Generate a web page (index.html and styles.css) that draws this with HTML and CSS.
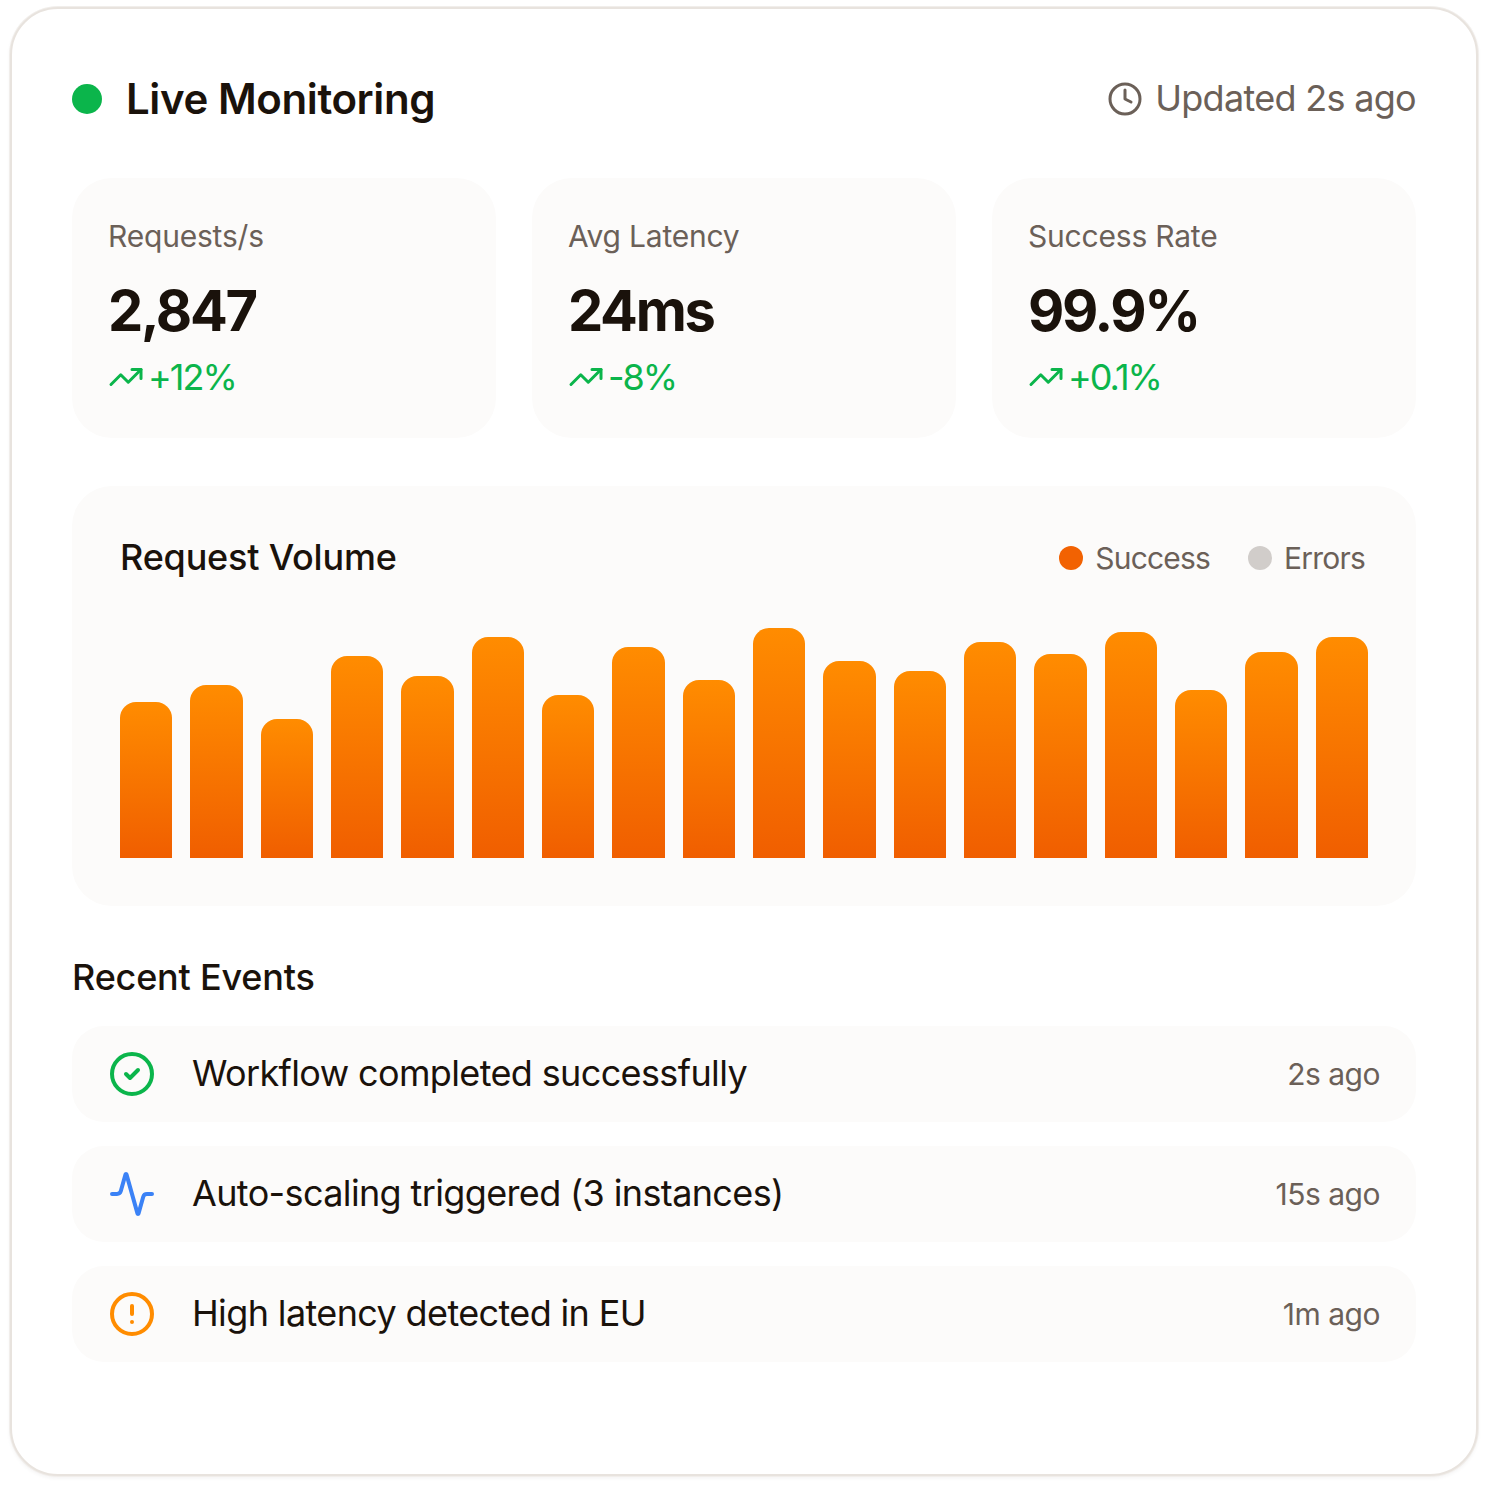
FILE: index.html
```html
<!DOCTYPE html>
<html lang="en">
<head>
<meta charset="utf-8">
<title>Live Monitoring</title>
<link rel="stylesheet" href="styles.css">
</head>
<body>
<main class="card">
  <header class="header">
    <div class="header-left"><span class="live-dot"></span><h1 class="title">Live Monitoring</h1></div>
    <div class="updated">
      <svg class="icon-clock" viewBox="0 0 24 24"><circle cx="12" cy="12" r="10"/><polyline points="12 6 12 12 16 14"/></svg>
      <span class="updated-text">Updated 2s ago</span>
    </div>
  </header>
  <section class="stats">
    <div class="stat">
      <div class="stat-label">Requests/s</div>
      <div class="stat-value">2,847</div>
      <div class="stat-trend"><svg class="icon-trend" viewBox="0 0 24 24"><polyline points="22 7 13.5 15.5 8.5 10.5 2 17"/><polyline points="16 7 22 7 22 13"/></svg><span>+12%</span></div>
    </div>
    <div class="stat">
      <div class="stat-label">Avg Latency</div>
      <div class="stat-value">24ms</div>
      <div class="stat-trend"><svg class="icon-trend" viewBox="0 0 24 24"><polyline points="22 7 13.5 15.5 8.5 10.5 2 17"/><polyline points="16 7 22 7 22 13"/></svg><span>-8%</span></div>
    </div>
    <div class="stat">
      <div class="stat-label">Success Rate</div>
      <div class="stat-value">99.9%</div>
      <div class="stat-trend"><svg class="icon-trend" viewBox="0 0 24 24"><polyline points="22 7 13.5 15.5 8.5 10.5 2 17"/><polyline points="16 7 22 7 22 13"/></svg><span>+0.1%</span></div>
    </div>
  </section>
  <section class="chart">
    <div class="chart-head">
      <h2 class="chart-title">Request Volume</h2>
      <div class="legend">
        <div class="legend-item"><span class="legend-dot legend-success"></span><span>Success</span></div>
        <div class="legend-item"><span class="legend-dot legend-errors"></span><span>Errors</span></div>
      </div>
    </div>
    <div class="bars">
      <div class="bar" style="height:156px"></div>
      <div class="bar" style="height:173px"></div>
      <div class="bar" style="height:139px"></div>
      <div class="bar" style="height:202px"></div>
      <div class="bar" style="height:182px"></div>
      <div class="bar" style="height:221px"></div>
      <div class="bar" style="height:163px"></div>
      <div class="bar" style="height:211px"></div>
      <div class="bar" style="height:178px"></div>
      <div class="bar" style="height:230px"></div>
      <div class="bar" style="height:197px"></div>
      <div class="bar" style="height:187px"></div>
      <div class="bar" style="height:216px"></div>
      <div class="bar" style="height:204px"></div>
      <div class="bar" style="height:226px"></div>
      <div class="bar" style="height:168px"></div>
      <div class="bar" style="height:206px"></div>
      <div class="bar" style="height:221px"></div>
    </div>
  </section>
  <section class="events">
    <h2 class="events-title">Recent Events</h2>
    <div class="event-list">
      <div class="event">
        <svg class="event-icon icon-green" viewBox="0 0 24 24"><circle cx="12" cy="12" r="10"/><path d="m9 12 2 2 4-4"/></svg>
        <span class="event-text">Workflow completed successfully</span>
        <span class="event-time">2s ago</span>
      </div>
      <div class="event">
        <svg class="event-icon icon-blue" viewBox="0 0 24 24"><path d="M22 12h-2.48a2 2 0 0 0-1.93 1.46l-2.35 8.36a.25.25 0 0 1-.48 0L9.24 2.18a.25.25 0 0 0-.48 0l-2.35 8.36A2 2 0 0 1 4.49 12H2"/></svg>
        <span class="event-text">Auto-scaling triggered (3 instances)</span>
        <span class="event-time">15s ago</span>
      </div>
      <div class="event">
        <svg class="event-icon icon-orange" viewBox="0 0 24 24"><circle cx="12" cy="12" r="10"/><line x1="12" y1="8" x2="12" y2="12"/><line x1="12" y1="16" x2="12.01" y2="16"/></svg>
        <span class="event-text">High latency detected in EU</span>
        <span class="event-time">1m ago</span>
      </div>
    </div>
  </section>
</main>
</body>
</html>
```
FILE: styles.css
```css
* { box-sizing: border-box; }
html, body { margin: 0; background: #fff; }
body { padding: 7px 10px 12px; font-family: Inter, "Liberation Sans", sans-serif; color: #1a120b; }
h1, h2 { margin: 0; }
svg { fill: none; stroke: currentColor; stroke-width: 2; stroke-linecap: round; stroke-linejoin: round; flex: none; display: block; }

.card { height: 1469px; padding: 60px; background: #fff; border: 2px solid #e8e3de; border-radius: 48px; box-shadow: 0 0 0 1px #f1eeeb, 0 2px 4px rgba(26, 18, 11, .06); }

.header { display: flex; justify-content: space-between; align-items: center; height: 60px; margin-bottom: 49px; }
.header-left { display: flex; align-items: center; gap: 24px; }
.live-dot { width: 30px; height: 30px; border-radius: 50%; background: #0bb54b; }
.title { font-size: 42px; font-weight: 600; line-height: 60px; letter-spacing: -.4px; }
.updated { display: flex; align-items: center; gap: 12px; font-size: 36px; color: #6b6058; letter-spacing: -.7px; }
.updated-text { padding-bottom: 2px; }
.icon-clock { width: 36px; height: 36px; }

.stats { display: grid; grid-template-columns: repeat(3, 1fr); gap: 36px; margin-bottom: 48px; }
.stat { height: 260px; padding: 36px; background: #fcfbfa; border-radius: 40px; }
.stat-label { font-size: 30px; line-height: 44px; color: #6b6058; letter-spacing: -.2px; }
.stat-value { font-size: 56px; font-weight: 700; line-height: 72px; margin-top: 17px; letter-spacing: -2.3px; }
.stat-trend { display: flex; align-items: center; gap: 4px; margin-top: 8px; font-size: 36px; line-height: 44px; color: #0bb54b; letter-spacing: -2px; }
.icon-trend { width: 36px; height: 36px; }

.chart { height: 420px; padding: 48px; margin-bottom: 48px; background: #fcfbfa; border-radius: 40px; }
.chart-head { display: flex; justify-content: space-between; align-items: center; height: 48px; margin-bottom: 36px; }
.chart-title { font-size: 36px; font-weight: 500; letter-spacing: -.2px; padding-bottom: 2px; }
.legend { display: flex; gap: 38px; margin-right: 3px; font-size: 30px; color: #6b6058; letter-spacing: -.8px; }
.legend-item { display: flex; align-items: center; gap: 12px; }
.legend-dot { width: 24px; height: 24px; border-radius: 50%; }
.legend-success { background: #f26202; }
.legend-errors { background: #d1cdca; }
.bars { display: flex; align-items: flex-end; gap: 18px; height: 240px; }
.bar { flex: 1; border-radius: 16px 16px 0 0; background: linear-gradient(to bottom, #ff8c00, #f05e00); }

.events-title { font-size: 36px; font-weight: 500; line-height: 46px; margin-bottom: 26px; letter-spacing: -.2px; }
.event-list { display: flex; flex-direction: column; gap: 24px; }
.event { display: flex; align-items: center; height: 96px; padding: 0 36px; gap: 36px; background: #fcfbfa; border-radius: 32px; }
.event-icon { width: 48px; height: 48px; }
.icon-green { color: #0bb54b; }
.icon-blue { color: #3b82f6; }
.icon-orange { color: #ff8c00; }
.event-text { flex: 1; font-size: 36px; letter-spacing: -.63px; padding-bottom: 2px; }
.event-time { font-size: 30px; color: #6b6058; letter-spacing: -.5px; }
```
